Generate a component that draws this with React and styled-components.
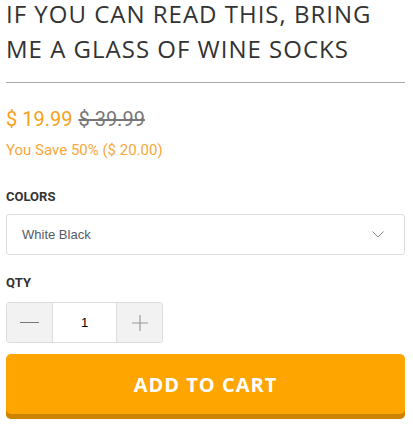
import React from 'react'
import styled, { createGlobalStyle } from 'styled-components'

const GlobalStyle = createGlobalStyle`
  html, body {
    margin: 0;
    padding: 0;
    background: #fff;
  }
`

const Container = styled.div`
  width: 413px;
  padding: 0 8px 0 6px;
  box-sizing: border-box;
  font-family: Roboto, "Liberation Sans", sans-serif;
`

const Title = styled.h1`
  margin: -4px 0 0;
  max-width: 380px;
  font-family: "Open Sans", sans-serif;
  font-weight: 400;
  font-size: 24px;
  line-height: 35px;
  letter-spacing: 1px;
  color: #333;
`

const Divider = styled.hr`
  border: 0;
  border-top: 1px solid #aaa;
  margin: 16px 0 0;
`

const PriceRow = styled.div`
  margin-top: 24px;
  display: flex;
  align-items: baseline;
  gap: 6px;
  font-size: 20px;
  line-height: 24px;
`

const Price = styled.span`
  color: #f7a11a;
`

const OldPrice = styled.span`
  color: #777;
  text-decoration: line-through;
`

const Savings = styled.div`
  margin-top: 10px;
  font-size: 15px;
  line-height: 18px;
  color: #f7a83a;
`

const Label = styled.div`
  margin-top: ${p => p.$top}px;
  font-size: 13px;
  font-weight: 700;
  line-height: 15px;
  color: #333;
`

const Select = styled.div`
  margin-top: 10px;
  height: 41px;
  border: 1px solid #ddd;
  border-radius: 3px;
  box-sizing: border-box;
  display: flex;
  align-items: center;
  justify-content: space-between;
  padding: 0 20px 0 15px;
  font-family: "Liberation Sans", Arial, sans-serif;
  font-size: 13px;
  color: #555b66;
`

const QtyBox = styled.div`
  margin-top: 12px;
  width: 157px;
  height: 41px;
  display: flex;
  border: 1px solid #ddd;
  border-radius: 3px;
  box-sizing: border-box;
  overflow: hidden;
`

const QtyButton = styled.button`
  width: 45px;
  border: 0;
  background: #f2f2f2;
  padding: 0;
  display: flex;
  align-items: center;
  justify-content: center;
`

const QtyInput = styled.div`
  flex: 1;
  border-left: 1px solid #ddd;
  border-right: 1px solid #ddd;
  display: flex;
  align-items: center;
  justify-content: center;
  font-family: "Liberation Sans", Arial, sans-serif;
  font-size: 13px;
  color: #000;
`

const CartButton = styled.button`
  margin-top: 11px;
  width: 100%;
  height: 65px;
  border: 0;
  border-radius: 5px;
  background: #ffa500;
  box-shadow: inset 0 -5px 0 #cc8400;
  color: #fff;
  font-family: "Open Sans", sans-serif;
  font-weight: 700;
  font-size: 20px;
  letter-spacing: 1px;
  padding: 0 0 4px;
`

const Chevron = () => (
  <svg width="12" height="7" viewBox="0 0 12 7" fill="none" stroke="#888" strokeWidth="1">
    <path d="M0.5 0.5 L6 6 L11.5 0.5" />
  </svg>
)

const Minus = () => (
  <svg width="19" height="19" viewBox="0 0 19 19" stroke="#777" strokeWidth="1.2">
    <path d="M0 9.5 H19" />
  </svg>
)

const Plus = () => (
  <svg width="16" height="16" viewBox="0 0 16 16" stroke="#999" strokeWidth="1.2">
    <path d="M0 8 H16 M8 0 V16" />
  </svg>
)

const App = () => {
  return (
    <Container>
      <GlobalStyle />
      <Title>IF YOU CAN READ THIS, BRING ME A GLASS OF WINE SOCKS</Title>
      <Divider />
      <PriceRow>
        <Price>$ 19.99</Price>
        <OldPrice>$ 39.99</OldPrice>
      </PriceRow>
      <Savings>You Save 50% ($ 20.00)</Savings>
      <Label $top={30}>COLORS</Label>
      <Select>
        <span>White Black</span>
        <Chevron />
      </Select>
      <Label $top={20}>QTY</Label>
      <QtyBox>
        <QtyButton><Minus /></QtyButton>
        <QtyInput>1</QtyInput>
        <QtyButton><Plus /></QtyButton>
      </QtyBox>
      <CartButton>ADD TO CART</CartButton>
    </Container>
  )
}

export default App
